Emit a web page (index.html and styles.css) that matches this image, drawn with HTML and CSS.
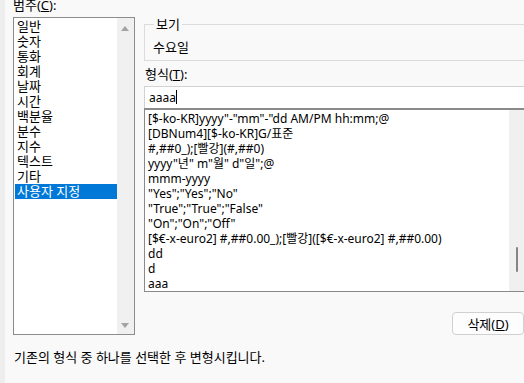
FILE: index.html
```html
<!DOCTYPE html>
<html lang="ko">
<head>
    <meta charset="UTF-8">
    <title>셀 서식 - 표시 형식</title>
    <link rel="stylesheet" href="styles.css">
</head>
<body>

  <div class="dialog">
    <div class="left">
      <div class="cat-label">범주(<u>C</u>):</div>
      <div class="cat-box">
        <ul class="cat-list">
          <li>일반</li>
          <li>숫자</li>
          <li>통화</li>
          <li>회계</li>
          <li>날짜</li>
          <li>시간</li>
          <li>백분율</li>
          <li>분수</li>
          <li>지수</li>
          <li>텍스트</li>
          <li>기타</li>
          <li class="selected">사용자 지정</li>
        </ul>
        <div class="cat-scroll">
          <span class="arrow-up"></span>
          <span class="arrow-down"></span>
        </div>
      </div>
    </div>

    <div class="right">
      <fieldset class="preview">
        <legend>보기</legend>
        <div class="sample">수요일</div>
      </fieldset>

      <div class="type-label">형식(<u>T</u>):</div>
      <div class="type-input">aaaa<span class="caret"></span></div>
      <div class="type-box">
        <ul class="type-list">
          <li>[$-ko-KR]yyyy"-"mm"-"dd AM/PM hh:mm;@</li>
          <li>[DBNum4][$-ko-KR]G/표준</li>
          <li>#,##0_);[빨강](#,##0)</li>
          <li>yyyy"년" m"월" d"일";@</li>
          <li>mmm-yyyy</li>
          <li>"Yes";"Yes";"No"</li>
          <li>"True";"True";"False"</li>
          <li>"On";"On";"Off"</li>
          <li>[$€-x-euro2] #,##0.00_);[빨강]([$€-x-euro2] #,##0.00)</li>
          <li>dd</li>
          <li>d</li>
          <li>aaa</li>
        </ul>
        <div class="type-scroll"><span class="thumb"></span></div>
      </div>

      <div class="actions">
        <button class="delete-btn">삭제(<u>D</u>)</button>
      </div>
    </div>
  </div>

  <p class="hint">기존의 형식 중 하나를 선택한 후 변형시킵니다.</p>

</body>
</html>
```

FILE: styles.css
```css
body {
    margin: 0;
    height: 383px;
    overflow: hidden;
    background-color: #f9f9f9;
    border-left: 5px solid #eeeeee;
    box-sizing: border-box;
    font-family: "Noto Sans", "Noto Sans CJK KR", sans-serif;
    font-size: 12px;
    color: #000;
}

u {
    text-decoration: underline;
    text-underline-offset: 1px;
}

ul {
    list-style: none;
    margin: 0;
    padding: 0;
}

.dialog {
    display: grid;
    grid-template-columns: 122px 382px;
    column-gap: 9px;
    padding-left: 8px;
    width: 540px;
}

/* korean labels run a bit wider than the format codes */
.cat-label,
.cat-list,
.preview legend,
.sample,
.type-label,
.delete-btn,
.hint {
    font-size: 13px;
}

/* category column */

.cat-label {
    line-height: 10px;
    height: 10px;
    margin-bottom: 7px;
}

.cat-box {
    display: flex;
    height: 318px;
    border: 1px solid #8c8c8c;
    box-sizing: border-box;
    background-color: #fff;
}

.cat-list {
    flex: 1;
    padding: 1px 0 0 1px;
}

.cat-list li {
    height: 15px;
    line-height: 15px;
    padding-left: 2px;
    white-space: nowrap;
}

.cat-list li.selected {
    background-color: #0078d7;
    color: #fff;
}

.cat-scroll {
    position: relative;
    width: 17px;
    background-color: #f0f0f0;
}

.arrow-up,
.arrow-down {
    position: absolute;
    left: 4px;
    width: 0;
    height: 0;
    border-left: 4px solid transparent;
    border-right: 4px solid transparent;
}

.arrow-up {
    top: 8px;
    border-bottom: 5px solid #a3a3a3;
}

.arrow-down {
    bottom: 6px;
    border-top: 5px solid #a3a3a3;
}

/* format column */

.preview {
    margin: 17px 0 0;
    padding: 9px 0 5px 8px;
    border: 1px solid #dcdcdc;
    min-width: 0;
}

.preview legend {
    padding: 0 2px;
    margin-left: 1px;
    line-height: 14px;
}

.sample {
    line-height: 15px;
}

.type-label {
    margin-top: 6px;
    line-height: 15px;
    padding-left: 1px;
}

.type-input {
    margin-top: 4px;
    height: 21px;
    line-height: 21px;
    border: 1px solid #d2d2d2;
    border-bottom: none;
    background-color: #fff;
    padding-left: 4px;
}

.caret {
    display: inline-block;
    width: 1px;
    height: 14px;
    background-color: #000;
    vertical-align: -2px;
}

.type-box {
    display: flex;
    height: 184px;
    box-sizing: border-box;
    border: 1px solid #8a8a8a;
    border-top-width: 2px;
    background-color: #fff;
}

.type-list {
    flex: 1;
    padding: 1px 0 0 3px;
    overflow: hidden;
}

.type-list li {
    height: 15px;
    line-height: 15px;
    white-space: nowrap;
}

.type-scroll {
    position: relative;
    width: 16px;
    background-color: #f0f0f0;
}

.thumb {
    position: absolute;
    left: 7px;
    top: 137px;
    width: 2px;
    height: 25px;
    border-radius: 1px;
    background-color: #858585;
}

.actions {
    display: flex;
    justify-content: flex-end;
    margin-top: 20px;
    padding-right: 2px;
}

.delete-btn {
    width: 72px;
    height: 23px;
    border: 1px solid #d0d0d0;
    border-radius: 4px;
    background-color: #fdfdfd;
    font-family: "Noto Sans", "Noto Sans CJK KR", sans-serif;
    color: #000;
    padding: 0;
}

.hint {
    margin: 14px 0 0 9px;
    line-height: 16px;
}
```
